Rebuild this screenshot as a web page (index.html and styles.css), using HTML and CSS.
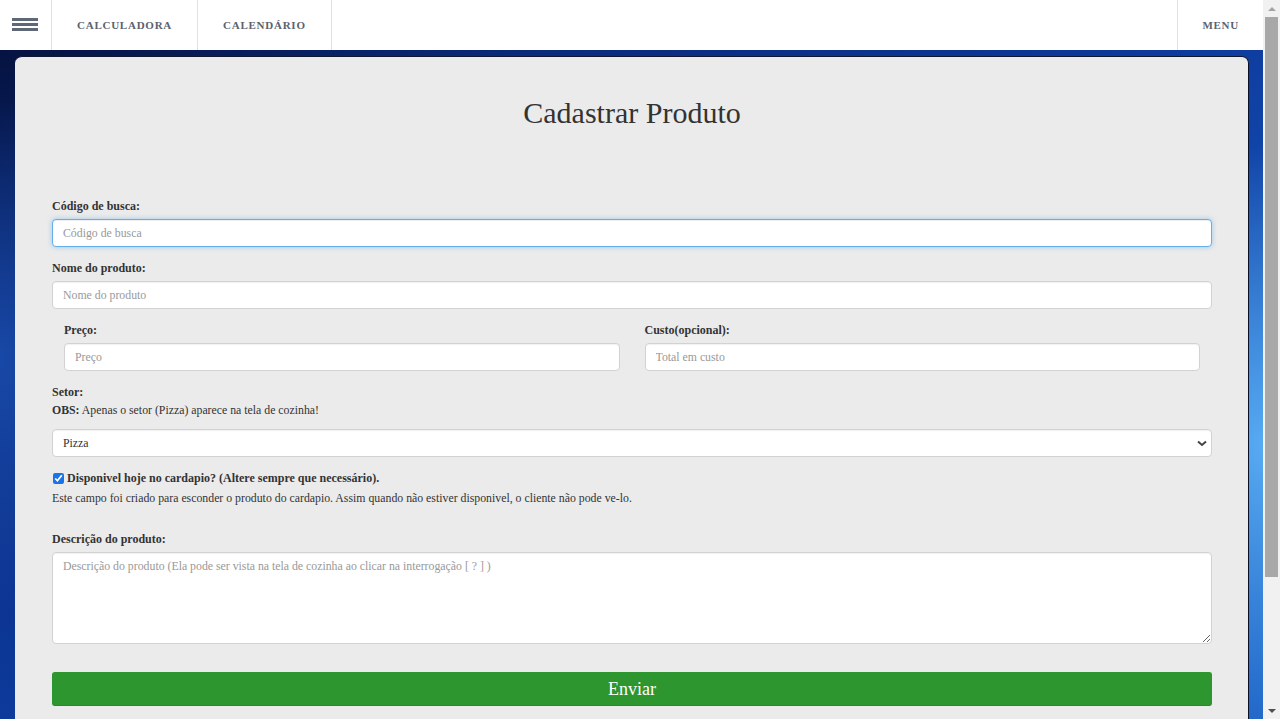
FILE: index.html
```html
<!DOCTYPE html>
<html lang="pt-BR">
<head>
<meta charset="utf-8">
<title>Cadastrar Produto</title>
<link rel="stylesheet" href="styles.css">
</head>
<body>
<div class="page">
  <nav class="topbar">
    <div class="nav-cell burger" aria-label="menu">
      <span></span><span></span><span></span>
    </div>
    <a class="nav-cell nav-link">CALCULADORA</a>
    <a class="nav-cell nav-link">CALENDÁRIO</a>
    <div class="nav-spacer"></div>
    <a class="nav-cell nav-link nav-right">MENU</a>
  </nav>
  <main class="stage">
    <section class="card">
      <h1 class="title">Cadastrar Produto</h1>
      <form class="form">
        <div class="group">
          <label class="lbl">Código de busca:</label>
          <input class="field focused" type="text" placeholder="Código de busca">
        </div>
        <div class="group">
          <label class="lbl">Nome do produto:</label>
          <input class="field" type="text" placeholder="Nome do produto">
        </div>
        <div class="group row">
          <div class="col">
            <label class="lbl">Preço:</label>
            <input class="field" type="text" placeholder="Preço">
          </div>
          <div class="col">
            <label class="lbl">Custo(opcional):</label>
            <input class="field" type="text" placeholder="Total em custo">
          </div>
        </div>
        <div class="group">
          <label class="lbl lbl-tight">Setor:</label>
          <p class="obs"><b>OBS:</b> Apenas o setor (Pizza) aparece na tela de cozinha!</p>
          <select class="field select">
            <option>Pizza</option>
          </select>
        </div>
        <div class="group group-wide">
          <label class="check"><input type="checkbox" checked> Disponivel hoje no cardapio? (Altere sempre que necessário).</label>
          <p class="note">Este campo foi criado para esconder o produto do cardapio. Assim quando não estiver disponivel, o cliente não pode ve-lo.</p>
        </div>
        <div class="group group-btn">
          <label class="lbl">Descrição do produto:</label>
          <textarea class="field area" placeholder="Descrição do produto (Ela pode ser vista na tela de cozinha ao clicar na interrogação [ ? ] )"></textarea>
        </div>
        <button class="submit" type="button">Enviar</button>
      </form>
    </section>
  </main>
</div>
<div class="scrollbar">
  <div class="sb-arrow sb-up"></div>
  <div class="sb-track"><div class="sb-thumb"></div></div>
  <div class="sb-arrow sb-down"></div>
</div>
</body>
</html>
```

FILE: styles.css
```css
* { box-sizing: border-box; }

html, body {
  margin: 0;
  height: 100%;
}

body {
  display: flex;
  overflow: hidden;
  font-family: "Liberation Serif", "Times New Roman", serif;
  color: #333;
}

.page {
  flex: 1;
  display: flex;
  flex-direction: column;
  min-width: 0;
  background:
    radial-gradient(ellipse 200px 300px at 100% 62%, rgba(90, 175, 245, 0.95) 0%, rgba(90, 175, 245, 0) 100%),
    radial-gradient(ellipse 120px 260px at 0% 50%, rgba(30, 85, 185, 0.7) 0%, rgba(30, 85, 185, 0) 100%),
    linear-gradient(150deg, #050f38 0%, #0a2a7c 25%, #0d3a9c 50%, #1857bc 80%, #1d62c6 100%);
}

/* ---------- top bar ---------- */
.topbar {
  height: 50px;
  flex: none;
  display: flex;
  background: #fff;
}

.nav-cell {
  display: flex;
  align-items: center;
  height: 50px;
  border-right: 1px solid #dde2e8;
}

.burger {
  width: 52px;
  flex-direction: column;
  justify-content: center;
  align-items: flex-start;
  gap: 2px;
  padding-left: 12px;
  padding-bottom: 1px;
}

.burger span {
  display: block;
  width: 26px;
  height: 3px;
  background: #5f6877;
}

.nav-link {
  padding: 0 25px;
  font-size: 11px;
  font-weight: bold;
  letter-spacing: 0.75px;
  color: #5b6270;
  text-decoration: none;
}

.nav-spacer { flex: 1; }

.nav-right {
  border-right: none;
  border-left: 1px solid #dde2e8;
  padding: 0 24px 0 24px;
}

/* ---------- card ---------- */
.stage {
  flex: 1;
  padding: 6px 14px 0 15px;
  min-height: 0;
}

.card {
  height: 100%;
  background: #ebebeb;
  border-radius: 7px 7px 0 0;
  border-top: 1px solid #10162e;
  border-right: 1px solid #0b1026;
  padding: 39px 36px 0 37px;
}

.title {
  margin: 0 0 68px;
  font-size: 30px;
  line-height: 34px;
  font-weight: normal;
  text-align: center;
  color: #333;
}

.form { display: block; }

.group { margin-bottom: 13px; }
.group-wide { margin-bottom: 24px; }
.group-btn { margin-bottom: 28px; }

.row {
  display: flex;
  padding: 0 12px;
  gap: 25px;
}

.col { flex: 1; }

.lbl {
  display: block;
  font-size: 12px;
  line-height: 17px;
  font-weight: bold;
  margin-bottom: 4px;
  color: #333;
}

.lbl-tight { margin-bottom: 1px; }

.obs {
  margin: 0 0 10px;
  font-size: 11.8px;
  line-height: 17px;
}

.field {
  display: block;
  width: 100%;
  height: 28px;
  padding: 0 10px;
  font-family: "Liberation Serif", "Times New Roman", serif;
  font-size: 11.8px;
  color: #333;
  background: #fff;
  border: 1px solid #d2d2d2;
  border-radius: 4px;
  box-shadow: inset 0 1px 1px rgba(0, 0, 0, 0.06);
  outline: none;
}

.field::placeholder { color: #999; }

.focused {
  border-color: #66afe9;
  box-shadow: inset 0 1px 1px rgba(0, 0, 0, 0.075), 0 0 5px rgba(102, 175, 233, 0.6);
}

.select {
  appearance: none;
  -webkit-appearance: none;
  background: #fff url("data:image/svg+xml,%3Csvg xmlns='http://www.w3.org/2000/svg' width='10' height='7' viewBox='0 0 10 7'%3E%3Cpath d='M1 1.5l4 3.5 4-3.5' fill='none' stroke='%23444' stroke-width='2'/%3E%3C/svg%3E") no-repeat right 4px center;
  background-size: 10px 7px;
}

.check {
  display: flex;
  align-items: center;
  gap: 3px;
  font-size: 12px;
  line-height: 17px;
  font-weight: bold;
}

.check input {
  margin: 0 0 0 1px;
  width: 11px;
  height: 11px;
  accent-color: #1a73e8;
}

.note {
  margin: 3px 0 0;
  font-size: 11.8px;
  line-height: 17px;
}

.area {
  height: 92px;
  padding: 6px 10px;
  resize: vertical;
}

.submit {
  display: block;
  width: 100%;
  height: 34px;
  font-family: "Liberation Serif", "Times New Roman", serif;
  font-size: 18px;
  color: #fff;
  background: #2e962f;
  border: 1px solid #2e962f;
  border-bottom-color: #5b6b3b;
  border-radius: 3px;
}

/* ---------- fake scrollbar ---------- */
.scrollbar {
  width: 17px;
  flex: none;
  display: flex;
  flex-direction: column;
  background: #f1f1f1;
}

.sb-arrow {
  height: 17px;
  flex: none;
  display: flex;
  align-items: center;
  justify-content: center;
}

.sb-up::before {
  content: "";
  border: 4px solid transparent;
  border-top: none;
  border-bottom: 4px solid #a3a3a3;
}

.sb-down::before {
  content: "";
  border: 4px solid transparent;
  border-bottom: none;
  border-top: 4px solid #505050;
}

.sb-track {
  flex: 1;
  padding: 0 2px;
}

.sb-thumb {
  height: 560px;
  background: #a8a8a8;
}
```
